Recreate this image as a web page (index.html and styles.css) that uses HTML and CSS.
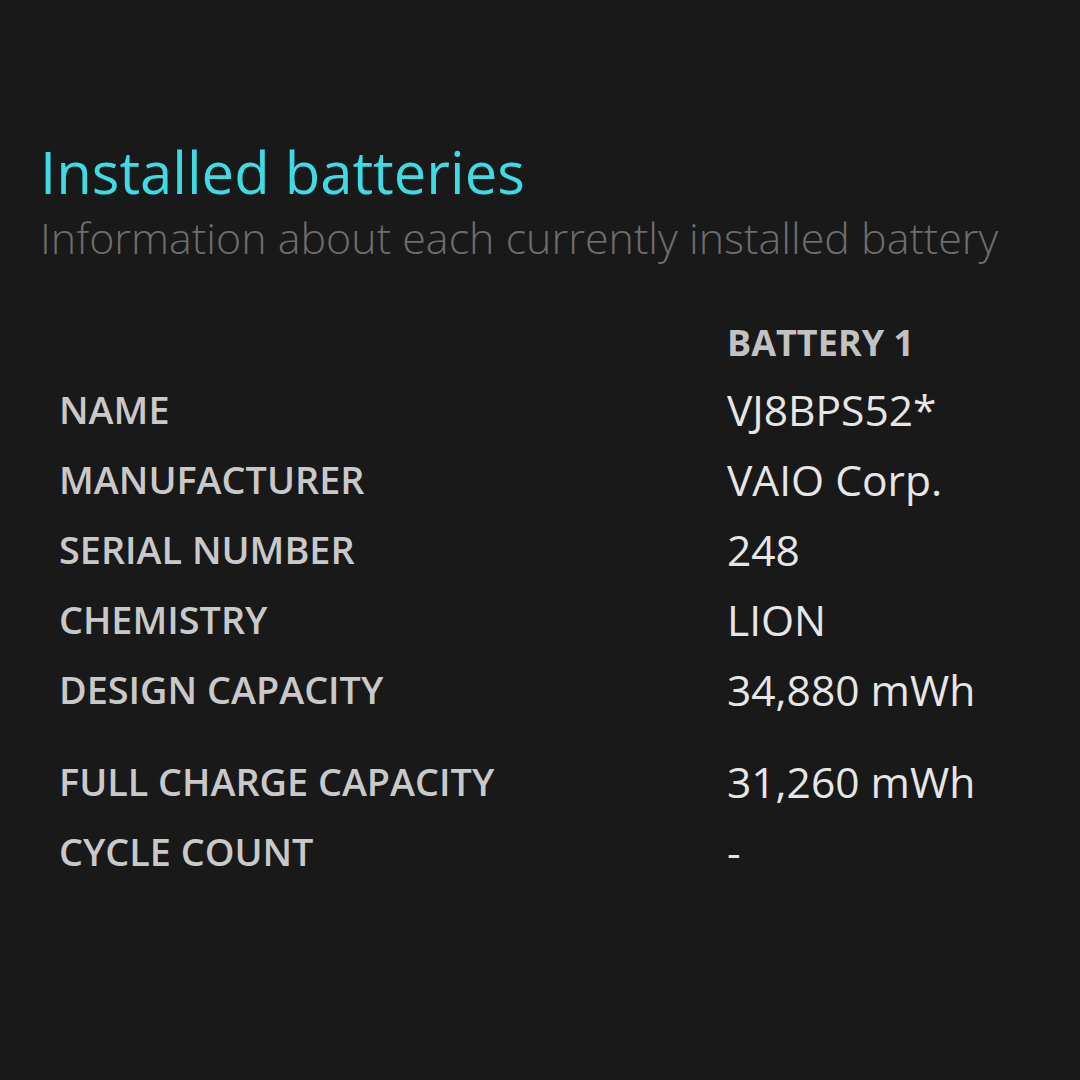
FILE: index.html
```html
<!DOCTYPE html>
<html>
<head>
<meta charset="utf-8">
<link rel="stylesheet" href="styles.css">
</head>
<body>
<main class="page">
  <h1 class="title">Installed batteries</h1>
  <p class="subtitle">Information about each currently installed battery</p>
  <div class="table">
    <div class="label head-row"></div><div class="head head-row">BATTERY 1</div>
    <div class="label">NAME</div><div class="value">VJ8BPS52*</div>
    <div class="label">MANUFACTURER</div><div class="value">VAIO Corp.</div>
    <div class="label">SERIAL NUMBER</div><div class="value">248</div>
    <div class="label">CHEMISTRY</div><div class="value">LION</div>
    <div class="label">DESIGN CAPACITY</div><div class="value">34,880 mWh</div>
    <div class="spacer"></div><div class="spacer"></div>
    <div class="label">FULL CHARGE CAPACITY</div><div class="value">31,260 mWh</div>
    <div class="label">CYCLE COUNT</div><div class="value">-</div>
  </div>
</main>
</body>
</html>
```

FILE: styles.css
```css
html, body {
  margin: 0;
  padding: 0;
  background: #1a1919;
}
body {
  width: 1080px;
  height: 1080px;
  overflow: hidden;
  font-family: "Open Sans", "Noto Sans", sans-serif;
}
.page {
  padding: 136px 0 0 40px;
}
.title {
  margin: 0;
  font-size: 58px;
  line-height: 72px;
  font-weight: 400;
  color: #3ddbe3;
}
.subtitle {
  margin: 0;
  font-size: 43px;
  line-height: 60px;
  font-weight: 300;
  color: #6d6d6d;
}
.table {
  display: grid;
  grid-template-columns: 668px auto;
  padding: 42px 0 0 19px;
}
.label {
  font-size: 37.8px;
  font-weight: 600;
  color: #c9c9c9;
  line-height: 70px;
}
.head {
  font-size: 36px;
  font-weight: 700;
  color: #c2c2c2;
}
.head-row {
  height: 65px;
  line-height: 66px;
}
.value {
  font-size: 42.5px;
  font-weight: 400;
  color: #e6e6e6;
  line-height: 70px;
}
.spacer {
  height: 22px;
}
```
